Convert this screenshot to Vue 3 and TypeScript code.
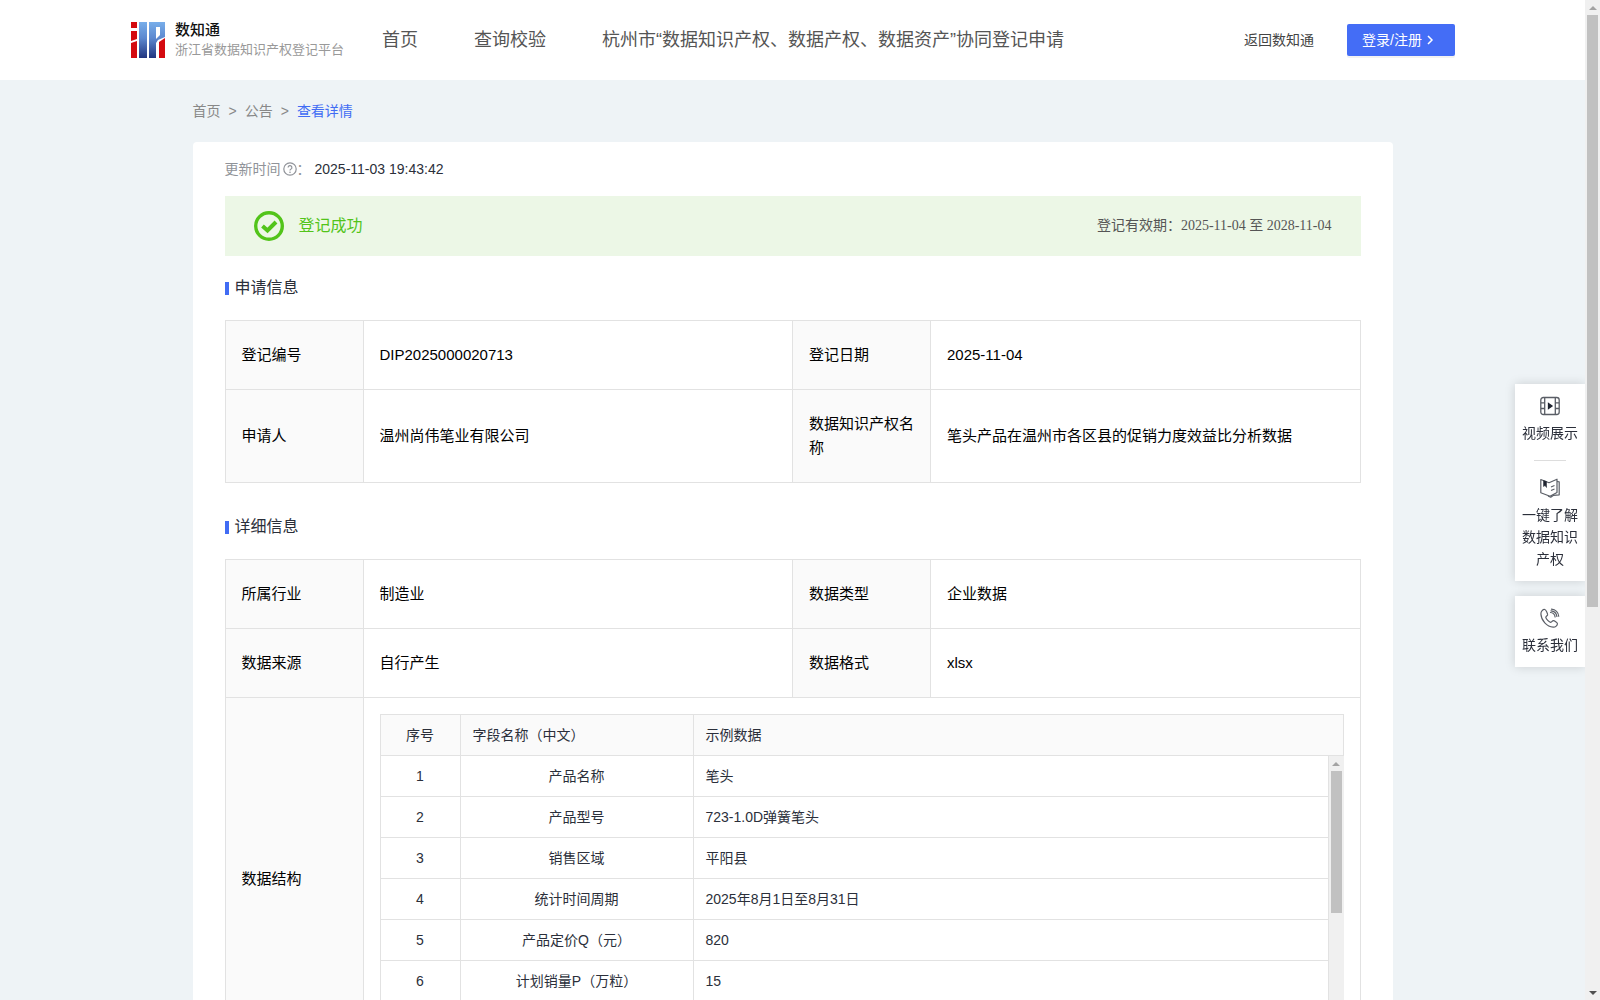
<script setup lang="ts">
interface Field {
  label: string
  value: string
}

interface StructureRow {
  name: string
  sample: string
}

const navItems: string[] = ['首页', '查询校验', '杭州市“数据知识产权、数据产权、数据资产”协同登记申请']

const applyRows: Field[][] = [
  [
    { label: '登记编号', value: 'DIP2025000020713' },
    { label: '登记日期', value: '2025-11-04' },
  ],
  [
    { label: '申请人', value: '温州尚伟笔业有限公司' },
    { label: '数据知识产权名称', value: '笔头产品在温州市各区县的促销力度效益比分析数据' },
  ],
]

const detailRows: Field[][] = [
  [
    { label: '所属行业', value: '制造业' },
    { label: '数据类型', value: '企业数据' },
  ],
  [
    { label: '数据来源', value: '自行产生' },
    { label: '数据格式', value: 'xlsx' },
  ],
]

const structure: StructureRow[] = [
  { name: '产品名称', sample: '笔头' },
  { name: '产品型号', sample: '723-1.0D弹簧笔头' },
  { name: '销售区域', sample: '平阳县' },
  { name: '统计时间周期', sample: '2025年8月1日至8月31日' },
  { name: '产品定价Q（元）', sample: '820' },
  { name: '计划销量P（万粒）', sample: '15' },
]
</script>

<template>
  <div class="shell">
    <div class="page">
      <header class="header">
        <a class="brand" href="#">
          <svg class="logo" viewBox="0 0 34 36" aria-hidden="true">
            <defs>
              <linearGradient id="logo-blue" x1="0" y1="0" x2="0" y2="36" gradientUnits="userSpaceOnUse">
                <stop offset="0" stop-color="#78aeea" />
                <stop offset="0.45" stop-color="#5c88cf" />
                <stop offset="1" stop-color="#22357f" />
              </linearGradient>
            </defs>
            <path fill="#d40a10" d="M0 0h6v6H0zM0 9h6v8L0 19zM0 21l6-2v17H0z" />
            <path fill="url(#logo-blue)" d="M8 0h8v36H8z" />
            <path fill="url(#logo-blue)" d="M18 0h16v15l-7 3-2 3v15h-7zM25 5v12l4-4V5z" fill-rule="evenodd" />
            <path fill="#d40a10" d="M34 16v20h-6V20z" />
          </svg>
          <span class="brand-text">
            <strong class="brand-name">数知通</strong>
            <span class="brand-sub">浙江省数据知识产权登记平台</span>
          </span>
        </a>
        <nav class="nav">
          <a v-for="item in navItems" :key="item" href="#">{{ item }}</a>
        </nav>
        <a class="back" href="#">返回数知通</a>
        <button class="login" type="button">
          <span>登录/注册</span>
          <svg viewBox="0 0 8 10" width="8" height="10" aria-hidden="true">
            <path d="M2 1l4 4-4 4" fill="none" stroke="currentColor" stroke-width="1.500" />
          </svg>
        </button>
      </header>

      <main class="content">
        <nav class="crumbs" aria-label="breadcrumb">
          <a href="#">首页</a>
          <span>&gt;</span>
          <a href="#">公告</a>
          <span>&gt;</span>
          <a class="current" href="#">查看详情</a>
        </nav>

        <article class="card">
          <div class="updated">
            <span>更新时间</span>
            <svg viewBox="0 0 14 14" width="14" height="14" aria-hidden="true">
              <circle cx="7" cy="7" r="6.200" fill="none" stroke="currentColor" stroke-width="1.200" />
              <path d="M5.100 5.600a1.900 1.900 0 1 1 2.700 1.700c-.6.300-.8.600-.8 1.200" fill="none" stroke="currentColor" stroke-width="1.200" />
              <circle cx="7" cy="10.300" r="0.800" fill="currentColor" />
            </svg>
            <span>：</span>
            <time>2025-11-03 19:43:42</time>
          </div>

          <div class="banner">
            <svg viewBox="0 0 30 30" width="30" height="30" aria-hidden="true">
              <circle cx="15" cy="15" r="13.300" fill="none" stroke="#52c41a" stroke-width="3.400" />
              <path d="M8.500 15l5 4.500 8.500-8.500" fill="none" stroke="#52c41a" stroke-width="4" />
            </svg>
            <span class="status">登记成功</span>
            <span class="period">登记有效期：2025-11-04 至 2028-11-04</span>
          </div>

          <h2 class="title first">申请信息</h2>
          <table class="info">
            <colgroup>
              <col class="c-label" /><col /><col class="c-label" /><col />
            </colgroup>
            <tbody>
              <tr v-for="(row, i) in applyRows" :key="i">
                <template v-for="field in row" :key="field.label">
                  <th scope="row">{{ field.label }}</th>
                  <td>{{ field.value }}</td>
                </template>
              </tr>
            </tbody>
          </table>

          <h2 class="title">详细信息</h2>
          <table class="info">
            <colgroup>
              <col class="c-label" /><col /><col class="c-label" /><col />
            </colgroup>
            <tbody>
              <tr v-for="(row, i) in detailRows" :key="i">
                <template v-for="field in row" :key="field.label">
                  <th scope="row">{{ field.label }}</th>
                  <td>{{ field.value }}</td>
                </template>
              </tr>
              <tr>
                <th scope="row">数据结构</th>
                <td class="nested" colspan="3">
                  <div class="structure">
                    <table class="grid head">
                      <colgroup><col class="c-no" /><col class="c-name" /><col /></colgroup>
                      <thead>
                        <tr>
                          <th class="center" scope="col">序号</th>
                          <th scope="col">字段名称（中文）</th>
                          <th scope="col">示例数据</th>
                        </tr>
                      </thead>
                    </table>
                    <div class="body">
                      <table class="grid">
                        <colgroup><col class="c-no" /><col class="c-name" /><col /></colgroup>
                        <tbody>
                          <tr v-for="(row, i) in structure" :key="row.name">
                            <td class="center">{{ i + 1 }}</td>
                            <td class="center">{{ row.name }}</td>
                            <td>{{ row.sample }}</td>
                          </tr>
                        </tbody>
                      </table>
                      <div class="bar" aria-hidden="true">
                        <i class="arrow up"></i>
                        <div class="track"><div class="thumb inner"></div></div>
                        <i class="arrow down"></i>
                      </div>
                    </div>
                  </div>
                </td>
              </tr>
            </tbody>
          </table>
        </article>
      </main>
    </div>

    <div class="bar" aria-hidden="true">
      <i class="arrow up"></i>
      <div class="track"><div class="thumb outer"></div></div>
      <i class="arrow down"></i>
    </div>

    <aside class="float">
      <div class="panel">
        <a href="#">
          <svg viewBox="0 0 20 20" width="20" height="20" fill="none" stroke="#5a5e66" stroke-width="1.300" aria-hidden="true">
            <rect x="0.800" y="1.500" width="18.400" height="17" rx="2.500" />
            <path d="M4.700 1.500v17M15.300 1.500v17M1 6.800h3.700M1 12.500h3.700M15.300 6.800H19M15.300 12.500H19" />
            <path d="M8.500 7.500l3.500 2.500-3.500 2.500z" fill="#1f2430" stroke="#1f2430" />
          </svg>
          <span>视频展示</span>
        </a>
        <hr />
        <a href="#">
          <svg viewBox="0 0 20 20" width="20" height="20" fill="none" stroke="#5a5e66" stroke-width="1.200" stroke-linejoin="round" aria-hidden="true">
            <path d="M.8 1.500l8.200 3.200 8-3.500v13.300l-7 3.700-9.200-3.400z" />
            <path d="M17 3.500l2.200.3v13l-6 .6-2.500 1.800-2.700-1.200" />
            <path d="M11 9l3.500-1.500M11 12.500l3.500-1.500" />
            <path d="M3.500 2.500v6l1.500-1 1.500 2v-6z" fill="#1f2430" stroke="#1f2430" stroke-width="0.500" />
          </svg>
          <span>一键了解数据知识产权</span>
        </a>
      </div>
      <div class="panel">
        <a href="#">
          <svg viewBox="0 0 20 20" width="20" height="20" fill="none" stroke="#5a5e66" stroke-width="1.200" stroke-linejoin="round" stroke-linecap="round" aria-hidden="true">
            <path d="M4.800 1.500C3 1.200.8 3.500.9 6c.3 6.500 6 12.700 12.300 13.200 2.300.1 4.300-1.700 4.200-3.700-.1-1-3-3-4.100-2.900-1 .1-1.500 1.700-2.500 1.700-1.800-.3-4.700-3.200-5-5 0-1 1.600-1.400 1.800-2.400.1-1.200-1.700-5.200-2.800-5.400z" />
            <path d="M10.500 4.500c2.500.2 4.300 2 4.600 4.500M11.500 1.200c4 .2 7 3.200 7.200 7" />
            <path d="M11 2.800c3.200.2 5.500 2.500 5.900 5.700" />
          </svg>
          <span>联系我们</span>
        </a>
      </div>
    </aside>
  </div>
</template>

<style>
body {
  margin: 0;
}
</style>

<style scoped>
.shell {
  position: relative;
  display: flex;
  height: 100vh;
  overflow: hidden;
  font-family: "Liberation Sans", "Noto Sans CJK SC", sans-serif;
  font-size: 14px;
  font-weight: 400;
  line-height: 22px;
  color: #2b2f3a;
}

.shell *,
.shell {
  box-sizing: border-box;
}

a {
  color: inherit;
  text-decoration: none;
}

.page {
  flex: 1;
  min-width: 0;
  overflow-y: auto;
  scrollbar-width: none;
  background: #eef3f6;
}

.header {
  display: flex;
  align-items: center;
  height: 80px;
  padding: 0 130px 0 131px;
  background: #fff;
  white-space: nowrap;
}

.brand {
  display: flex;
  align-items: center;
  gap: 10px;
  width: 251px;
}

.logo {
  width: 34px;
  height: 36px;
}

.brand-text {
  display: flex;
  flex-direction: column;
}

.brand-name {
  font-size: 15px;
  line-height: 20px;
  font-weight: 500;
  color: #111;
}

.brand-sub {
  font-size: 13px;
  line-height: 20px;
  color: #999;
}

.nav {
  display: flex;
  flex: 1;
  gap: 56px;
  font-size: 18px;
  color: #555;
}

.back {
  margin-right: 33px;
  color: #444;
}

.login {
  display: flex;
  align-items: center;
  gap: 4px;
  width: 108px;
  height: 32px;
  padding: 0 15px;
  border: 0;
  border-radius: 2px;
  background: #446df6;
  box-shadow: 0 2px 0 rgba(0, 0, 0, 0.05);
  color: #fff;
  font: inherit;
}

.content {
  max-width: 1200px;
  margin: 0 auto;
}

.crumbs {
  display: flex;
  gap: 8px;
  padding: 20px 0;
  color: #888;
}

.crumbs .current {
  color: #416cf4;
}

.card {
  padding: 16px 32px 32px;
  border-radius: 4px;
  background: #fff;
}

.updated {
  display: flex;
  align-items: center;
  margin-bottom: 16px;
  color: #909399;
}

.updated svg {
  margin-left: 2px;
}

.updated time {
  margin-left: 4px;
  color: #2b2f3a;
}

.banner {
  display: flex;
  align-items: center;
  gap: 15px;
  height: 60px;
  padding: 0 29px;
  background: #ecf7e6;
}

.status {
  flex: 1;
  font-size: 16px;
  color: #52c41a;
}

.period {
  font-family: "Liberation Serif", "Noto Sans CJK SC", serif;
  color: #555;
}

.title {
  display: flex;
  align-items: center;
  gap: 6px;
  margin: 31px 0 19px;
  font-size: 16px;
  font-weight: 400;
  line-height: 26px;
}

.title.first {
  margin-top: 19px;
}

.title::before {
  content: "";
  width: 4px;
  height: 13px;
  background: #416cf4;
}

.info,
.grid {
  width: 100%;
  border-collapse: collapse;
  table-layout: fixed;
}

.info {
  color: #000;
  font-size: 15px;
  line-height: 24px;
}

.c-label {
  width: 138px;
}

.info th,
.info td {
  padding: 22px 16px;
  border: 1px solid #e2e2e2;
  font-weight: 400;
  text-align: left;
}

.info th {
  background: #fafafa;
}

.info td.nested {
  padding: 16px;
}

.structure {
  color: #2b2f3a;
  font-size: 14px;
  line-height: 22px;
}

.c-no {
  width: 80px;
}

.c-name {
  width: 233px;
}

.info .grid th,
.info .grid td {
  height: 41px;
  padding: 0 12px;
}

.grid .center {
  text-align: center;
}

.body {
  display: flex;
  height: 287px;
  overflow: hidden;
}

.body .grid {
  flex: 1;
  align-self: flex-start;
}

.info .body .grid tr:first-child td {
  height: 40px;
  border-top: 0;
}

.bar {
  display: flex;
  flex: none;
  flex-direction: column;
  align-items: center;
  width: 15px;
  background: #f0f0f0;
}

.arrow {
  display: flex;
  justify-content: center;
  align-items: center;
  height: 15px;
}

.arrow::before {
  content: "";
  border: 4px solid transparent;
}

.arrow.up::before {
  border-top-width: 0;
  border-bottom-color: #a3a3a3;
}

.arrow.down::before {
  border-bottom-width: 0;
  border-top-color: #505050;
}

.track {
  flex: 1;
}

.thumb {
  width: 11px;
  background: #c1c1c1;
}

.thumb.outer {
  height: 61%;
}

.thumb.inner {
  height: 142px;
}

.float {
  position: absolute;
  top: 372px;
  right: 15px;
  display: flex;
  flex-direction: column;
  gap: 15px;
  width: 70px;
  overflow: hidden;
  padding: 12px 0 12px 12px;
  box-sizing: content-box;
}

.panel {
  padding: 12px 7px 11px;
  background: #fff;
  box-shadow: 0 0 10px rgba(0, 0, 0, 0.15);
}

.panel a {
  display: flex;
  flex-direction: column;
  align-items: center;
  gap: 6px;
  text-align: center;
}

.panel hr {
  width: 32px;
  height: 1px;
  margin: 16px auto 17px;
  border: 0;
  background: #ddd;
}
</style>
